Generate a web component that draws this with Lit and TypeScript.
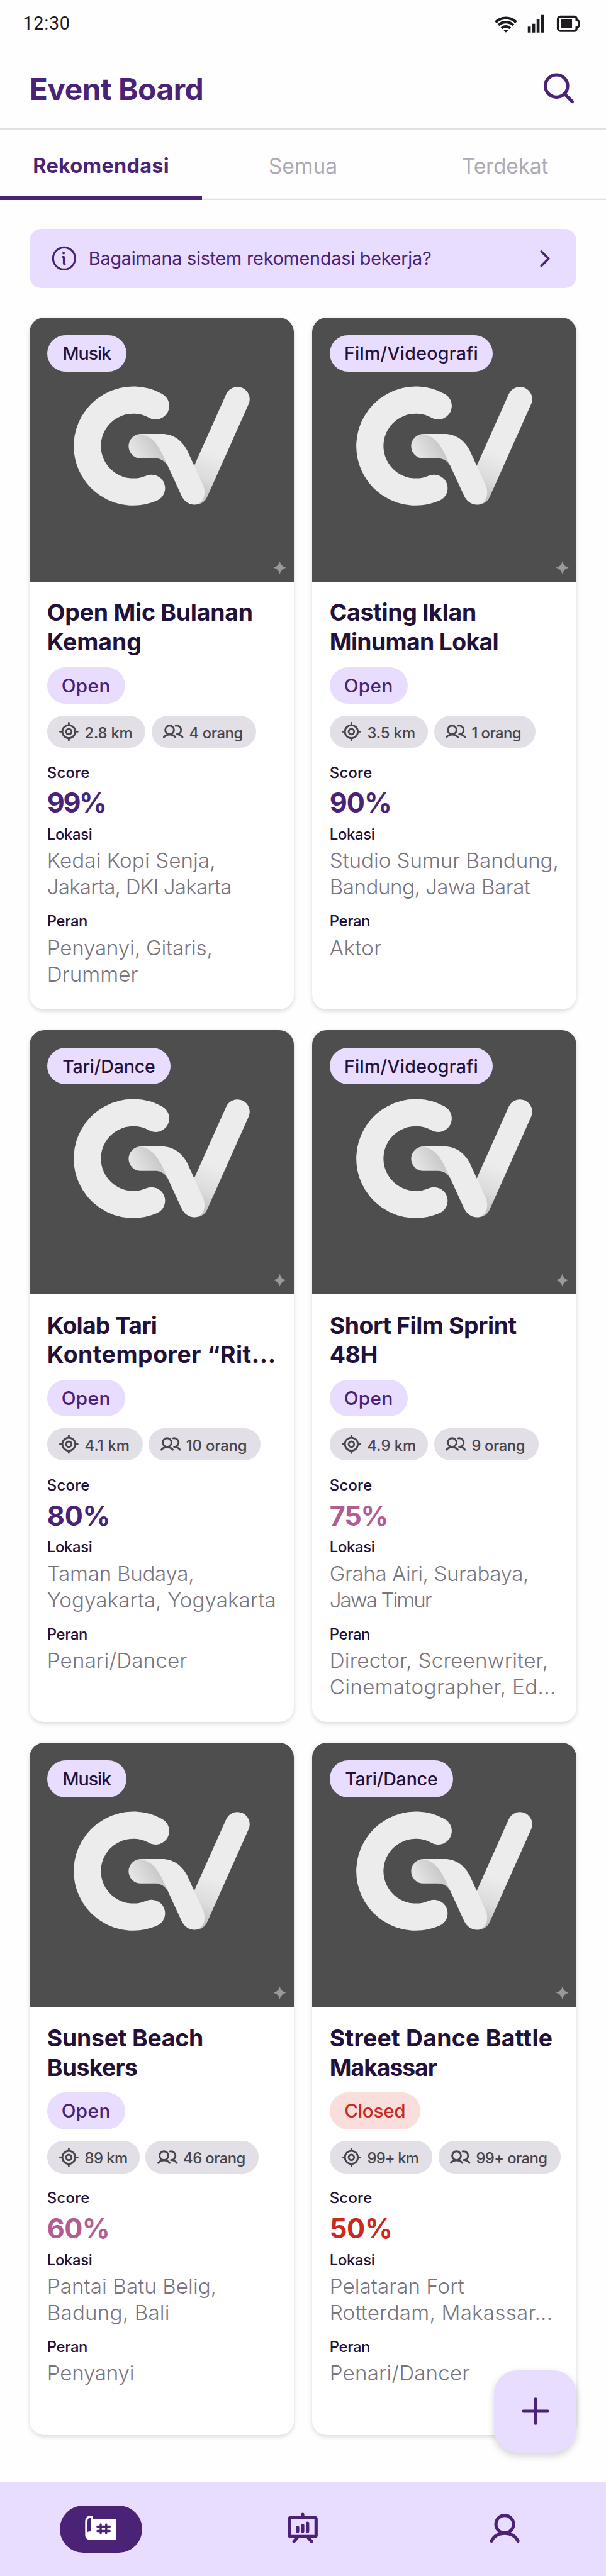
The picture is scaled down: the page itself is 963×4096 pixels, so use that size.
import { LitElement, html, css, unsafeCSS } from "lit";
import { customElement, property } from "lit/decorators.js";

// Layout units: the design is 412 x 1753 dp, with 3 artwork pixels per dp.
const DP = 4096 / 1753;
const PX = DP / 3;
const u = (n: number) => unsafeCSS(`${(n * DP).toFixed(3)}px`);

/** A single line of text, tracked so that its glyphs span `w` artwork pixels. */
@customElement("fit-line")
export class FitLine extends LitElement {
  static styles = css`
    :host { display: block; white-space: nowrap; font-kerning: normal; }
  `;
  @property({ type: Number }) w = 0;
  @property() text = "";

  updated() {
    if (!this.w || this.text.length < 2) return;
    const cs = getComputedStyle(this);
    const ctx = document.createElement("canvas").getContext("2d")!;
    ctx.font = `${cs.fontWeight} ${cs.fontSize} ${cs.fontFamily}`;
    const m = ctx.measureText(this.text);
    const ink = m.actualBoundingBoxLeft + m.actualBoundingBoxRight;
    const ls = (this.w * PX - ink) / (this.text.length - 1);
    this.style.letterSpacing = `${ls.toFixed(3)}px`;
  }
  render() { return html`${this.text}`; }
}

type Line = [string, number];
interface EventItem {
  tag: Line; tagW: number; title: Line[];
  closed?: boolean;
  km: Line; kmW: number; people: Line; peopleW: number;
  score: Line; tone: "high" | "mid" | "low";
  place: Line[]; roles: Line[];
}

const EVENTS: EventItem[] = [
  { tag: ["Musik", 97], tagW: 162, title: [["Open Mic Bulanan", 416], ["Kemang", 188]],
    km: ["2.8 km", 95], kmW: 201, people: ["4 orang", 108], peopleW: 213, score: ["99%", 116], tone: "high",
    place: [["Kedai Kopi Senja,", 337], ["Jakarta, DKI Jakarta", 373]], roles: [["Penyanyi, Gitaris,", 331], ["Drummer", 182]] },
  { tag: ["Film/Videografi", 269], tagW: 333, title: [["Casting Iklan", 295.5], ["Minuman Lokal", 340]],
    km: ["3.5 km", 95.5], kmW: 201, people: ["1 orang", 99.4], peopleW: 207, score: ["90%", 121], tone: "high",
    place: [["Studio Sumur Bandung,", 462], ["Bandung, Jawa Barat", 406]], roles: [["Aktor", 106]] },
  { tag: ["Tari/Dance", 187], tagW: 252, title: [["Kolab Tari", 221], ["Kontemporer “Rit...", 461]],
    km: ["4.1 km", 89], kmW: 195, people: ["10 orang", 122], peopleW: 228, score: ["80%", 123], tone: "high",
    place: [["Taman Budaya,", 296], ["Yogyakarta, Yogyakarta", 464.5]], roles: [["Penari/Dancer", 282]] },
  { tag: ["Film/Videografi", 269], tagW: 333, title: [["Short Film Sprint", 381], ["48H", 94.6]],
    km: ["4.9 km", 97], kmW: 201, people: ["9 orang", 107], peopleW: 213, score: ["75%", 114], tone: "mid",
    place: [["Graha Airi, Surabaya,", 401], ["Jawa Timur", 208]], roles: [["Director, Screenwriter,", 439], ["Cinematographer, Ed...", 456]] },
  { tag: ["Musik", 97], tagW: 162, title: [["Sunset Beach", 315], ["Buskers", 181.5]],
    km: ["89 km", 85.4], kmW: 189, people: ["46 orang", 125], peopleW: 231, score: ["60%", 122], tone: "mid",
    place: [["Pantai Batu Belig,", 339], ["Badung, Bali", 244]], roles: [["Penyanyi", 172]] },
  { tag: ["Tari/Dance", 187], tagW: 252, title: [["Street Dance Battle", 452], ["Makassar", 217]], closed: true,
    km: ["99+ km", 103], kmW: 210, people: ["99+ orang", 143.5], peopleW: 249, score: ["50%", 121], tone: "low",
    place: [["Pelataran Fort", 271], ["Rotterdam, Makassar...", 448]], roles: [["Penari/Dancer", 282]] },
];

const line = ([text, w]: Line) => html`<fit-line .w=${w} .text=${text}></fit-line>`;
const width = (w: number) => `width:${(w * PX).toFixed(2)}px`;

const logo = html`
  <svg class="art" viewBox="52 47 1411 1411" aria-hidden="true">
    <defs>
      <linearGradient id="fold" gradientUnits="userSpaceOnUse" x1="610" y1="770" x2="735" y2="700">
        <stop offset="0" stop-color="#e4e4e4"/><stop offset="1" stop-color="#c6c6c6"/>
      </linearGradient>
      <linearGradient id="arm" gradientUnits="userSpaceOnUse" x1="1060" y1="780" x2="975" y2="1000">
        <stop offset="0" stop-color="#ececec"/><stop offset=".6" stop-color="#dcdcdc"/><stop offset="1" stop-color="#c4c4c4"/>
      </linearGradient>
    </defs>
    <path d="M724 518 A245 245 0 1 0 702 957" fill="none" stroke="#ececec" stroke-width="145" stroke-linecap="round"/>
    <path d="M1160 482 L938 979" fill="none" stroke="url(#arm)" stroke-width="131" stroke-linecap="round"/>
    <path d="M645 668 A65 65 0 0 0 645 798 H722 C752 798 772 812 788 836 L800 740 L700 668Z" fill="url(#fold)"/>
    <path d="M640 668 H760 C815 668 863 700 892 755 L974 934 C1003 995 972 1045 932 1045 C900 1045 875 1025 862 997 L786 832 C768 792 752 755 732 727 C708 693 675 672 640 668Z" fill="#ececec"/>
    <path d="M1386 1347 Q1392 1375 1420 1381 Q1392 1387 1386 1415 Q1380 1387 1352 1381 Q1380 1375 1386 1347Z" fill="#999"/>
  </svg>`;

const targetIcon = html`
  <svg class="mini" viewBox="0 0 42 42" fill="none" stroke="currentColor" stroke-width="3.7" stroke-linecap="round">
    <circle cx="21" cy="21" r="13.2"/><circle cx="21" cy="21" r="5.6"/>
    <path d="M21 3v4M21 35v4M3 21h4M35 21h4"/>
  </svg>`;

const peopleIcon = html`
  <svg class="mini" viewBox="0 0 42 42" fill="none" stroke="currentColor" stroke-width="3.7" stroke-linecap="round" stroke-linejoin="round">
    <circle cx="13.5" cy="17.6" r="8.9"/>
    <path d="M1.9 32.3 C7.5 25.3 19.5 25.3 25.2 32.3"/>
    <path d="M26 8.9 C32 7.8 37 12.3 37 17.6 C37 22.6 33.3 26.3 27.8 26.5 C32.5 26.6 37 28.6 39.8 32.3"/>
  </svg>`;

@customElement("event-card")
export class EventCard extends LitElement {
  static styles = css`
    :host {
      display: block; position: relative; height: ${u(471)}; background: #fff;
      border-radius: ${u(10)}; box-shadow: 0 ${u(1)} ${u(3)} rgba(0,0,0,.14);
    }
    .art { display: block; width: 100%; height: ${u(180)}; background: #4e4e4e; border-radius: ${u(10)} ${u(10)} 0 0; }
    .pill {
      display: flex; align-items: center; justify-content: center; box-sizing: border-box;
      height: ${u(25)}; border-radius: ${u(12.5)}; background: #e8ddff; color: #241139;
      font-size: ${u(12.2)}; font-weight: 500;
    }
    .tag { position: absolute; top: ${u(12)}; left: ${u(12)}; }
    .body { padding: ${u(11.2)} ${u(12)} 0; }
    .title { font-size: ${u(16)}; line-height: ${u(20)}; font-weight: 700; color: #241139; height: ${u(40)}; }
    .status { margin-top: ${u(6.8)}; color: #4a2377; font-size: ${u(12.7)}; }
    .status.closed { background: #f9dedc; color: #cb2920; }
    .chips { display: flex; gap: ${u(4)}; margin-top: ${u(8)}; }
    .chip {
      display: flex; align-items: center; box-sizing: border-box; flex: none; height: ${u(22)};
      padding-left: ${u(8)}; border-radius: ${u(11)}; background: #e2dfe6; color: #48464c;
      font-size: ${u(10.2)}; font-weight: 500;
    }
    .mini { width: ${u(14)}; height: ${u(14)}; flex: none; margin-right: ${u(3.6)}; }
    .chip fit-line { padding-top: ${u(1.4)}; }
    .label { font-size: ${u(10.2)}; line-height: ${u(14)}; font-weight: 500; color: #241139; }
    .label.score-l { margin-top: ${u(10)}; }
    .label.place-l { margin-top: ${u(2.9)}; }
    .label.role-l { margin-top: ${u(7.7)}; }
    .score { font-size: ${u(18.5)}; line-height: ${u(24)}; font-weight: 700; margin-top: ${u(1.3)}; color: #4a2377; }
    .score.mid { color: #b25c92; }
    .score.low { color: #cb2920; }
    .text { font-size: ${u(14.2)}; line-height: ${u(18)}; font-weight: 300; color: #79747e; margin-top: ${u(1.5)}; }
  `;
  @property({ attribute: false }) item!: EventItem;

  render() {
    const e = this.item;
    return html`
      ${logo}
      <div class="pill tag" style=${width(e.tagW)}>${line(e.tag)}</div>
      <div class="body">
        <div class="title">${e.title.map(line)}</div>
        ${e.closed
          ? html`<div class="pill status closed" style=${width(185)}>${line(["Closed", 122])}</div>`
          : html`<div class="pill status" style=${width(159)}>${line(["Open", 96])}</div>`}
        <div class="chips">
          <div class="chip" style=${width(e.kmW)}>${targetIcon}${line(e.km)}</div>
          <div class="chip" style=${width(e.peopleW)}>${peopleIcon}${line(e.people)}</div>
        </div>
        <div class="label score-l">${line(["Score", 84])}</div>
        <div class="score ${e.tone}">${line(e.score)}</div>
        <div class="label place-l">${line(["Lokasi", 90])}</div>
        <div class="text">${e.place.map(line)}</div>
        <div class="label role-l">${line(["Peran", 80])}</div>
        <div class="text">${e.roles.map(line)}</div>
      </div>`;
  }
}

@customElement("app-root")
export class AppRoot extends LitElement {
  static styles = css`
    :host {
      display: flex; flex-direction: column; position: relative; width: 100%; height: 4096px;
      overflow: hidden; background: #fefefe; font-family: Inter, "Liberation Sans", sans-serif;
    }
    svg { display: block; flex: none; }
    .statusbar { display: flex; justify-content: space-between; align-items: center; flex: none;
      height: ${u(32)}; padding: 0 ${u(17)} 0 ${u(15.5)}; box-sizing: border-box; color: #1d1b20; }
    .time { font-family: Roboto, sans-serif; font-size: ${u(12.3)}; line-height: ${u(32)}; font-weight: 400; }
    .system { width: ${u(59)}; height: ${u(16)}; }
    .header { display: flex; justify-content: space-between; align-items: center; flex: none; height: ${u(56)};
      box-sizing: border-box; padding: 0 ${u(20)}; border-bottom: ${u(1)} solid #e2dfe6; color: #4a2377; }
    .header h1 { margin: 0; padding-top: ${u(2.8)}; font-size: ${u(20.5)}; font-weight: 700; }
    .search { width: ${u(24)}; height: ${u(24)}; margin-bottom: ${u(1.6)}; }
    .tabs { display: grid; grid-template-columns: repeat(3, 1fr); flex: none; height: ${u(48)};
      box-shadow: inset 0 -${u(1)} #e2dfe6; color: #aeaab3; font-size: ${u(14.4)}; }
    .tab { display: flex; justify-content: center; line-height: ${u(49.4)}; height: ${u(48)}; font-weight: 400; }
    .tab.active { color: #4a2377; font-size: ${u(13.9)}; font-weight: 700; box-shadow: inset 0 -${u(2.6)} #4a2377; }
    .main { display: flex; flex-direction: column; gap: ${u(20)}; flex: none; height: ${u(1553)};
      box-sizing: border-box; padding: ${u(20)} ${u(20)} 0; }
    .banner { display: flex; align-items: center; height: ${u(40)}; border-radius: ${u(8)}; background: #e8ddff;
      color: #4a2377; font-size: ${u(12.3)}; line-height: ${u(40)}; padding: 0 ${u(17)} 0 ${u(15.3)}; }
    .info { width: ${u(17)}; height: ${u(17)}; margin-right: ${u(8)}; }
    .chevron { width: ${u(9)}; height: ${u(14)}; margin-left: auto; }
    .grid { display: grid; grid-template-columns: ${u(180)} ${u(180)}; justify-content: space-between; row-gap: ${u(14)}; }
    .nav { display: grid; grid-template-columns: repeat(3, 1fr); align-items: center; justify-items: center;
      flex: none; height: ${u(64)}; background: #e8ddff; color: #4a2377; }
    .slot { display: flex; align-items: center; justify-content: center; width: ${u(56)}; height: ${u(32)}; border-radius: ${u(16)}; }
    .slot.on { background: #4a2377; }
    .slot svg { width: ${u(24)}; height: ${u(24)}; }
    .fab { position: absolute; right: ${u(20)}; bottom: ${u(84)}; width: ${u(56)}; height: ${u(56)};
      display: flex; align-items: center; justify-content: center; border-radius: ${u(16)};
      background: #e8ddff; color: #4a2377; box-shadow: 0 ${u(2)} ${u(5)} rgba(0,0,0,.17); }
    .fab svg { width: ${u(24)}; height: ${u(24)}; }
  `;

  render() {
    return html`
      <div class="statusbar">
        <div class="time">${line(["12:30", 92])}</div>
        <svg class="system" viewBox="1008 24 177 48" fill="none" stroke="currentColor">
          <path stroke-width="5.6" d="M1011.3 45 A29.7 29.7 0 0 1 1053.3 45"/>
          <path stroke-width="5.4" d="M1017.3 51 A21.3 21.3 0 0 1 1047.3 51"/>
          <path stroke-width="5" d="M1023.5 57.2 A12.5 12.5 0 0 1 1041.1 57.2"/>
          <path fill="currentColor" stroke="none" d="M1032.3 66 L1027.8 61.6 Q1032.3 58.6 1036.8 61.6Z"/>
          <path fill="currentColor" stroke="none" d="M1077 54h6v12h-6zM1086 48h6v18h-6zM1095 39h6v27h-6zM1104 30h6v36h-6z"/>
          <path stroke-width="4.4" d="M1143.5 33.5H1172a4.5 4.5 0 0 1 4.5 4.5V40.6q4.5 1 4.5 4v7q0 3-4.5 4V58a4.5 4.5 0 0 1-4.5 4.5H1143.5a5 5 0 0 1-5-5V38.5a5 5 0 0 1 5-5z"/>
          <path fill="currentColor" stroke="none" d="M1144.7 38.7h22.6v18h-22.6z"/>
        </svg>
      </div>
      <div class="header">
        <h1>${line(["Event Board", 349])}</h1>
        <svg class="search" viewBox="1104 140 72 72" fill="none" stroke="currentColor" stroke-width="6.6" stroke-linecap="round">
          <circle cx="1135.3" cy="175.5" r="22.7"/><path d="M1152 192 L1167.3 207.3"/>
        </svg>
      </div>
      <div class="tabs">
        <div class="tab active">${line(["Rekomendasi", 274])}</div>
        <div class="tab">${line(["Semua", 137])}</div>
        <div class="tab">${line(["Terdekat", 175])}</div>
      </div>
      <div class="main">
        <div class="banner">
          <svg class="info" viewBox="0 0 51 51" fill="none" stroke="currentColor" stroke-width="4" stroke-linecap="round" stroke-linejoin="round">
            <circle cx="25.5" cy="25.5" r="22.5"/><path d="M22.8 22.5h2.2v13q0 1.5 2 1.5"/><circle cx="24.5" cy="14.8" r="2.6" fill="currentColor" stroke="none"/>
          </svg>
          ${line(["Bagaimana sistem rekomendasi bekerja?", 696])}
          <svg class="chevron" viewBox="0 0 27 42" fill="none" stroke="currentColor" stroke-width="4.6" stroke-linecap="round" stroke-linejoin="round">
            <path d="M5.5 6.3 L20.3 21 L5.5 35.7"/>
          </svg>
        </div>
        <div class="grid">${EVENTS.map((e) => html`<event-card .item=${e}></event-card>`)}</div>
      </div>
      <div class="nav">
        <div class="slot on">
          <svg viewBox="0 0 72 72">
            <path fill="#fff" d="M4.3 49V19.5A10.5 10.5 0 0 1 14.8 9H18.8A1.5 1.5 0 0 1 20.3 10.5V15.3H66.5A1.5 1.5 0 0 1 68 16.8V57.2A1.5 1.5 0 0 1 66.5 58.7H14A9.7 9.7 0 0 1 4.3 49Z"/>
            <path fill="#4a2377" d="M9 42.3V20.5Q9 13.5 16 13.5V41Q12 41 9 42.3Z"/>
            <path stroke="#4a2377" stroke-width="4.3" stroke-linecap="round" d="M29.3 31.4H54.4M29.3 40.4H54.4M36 27V45.3M47.2 27V45.3"/>
          </svg>
        </div>
        <div class="slot">
          <svg viewBox="0 0 72 72" fill="none" stroke="currentColor" stroke-width="6.6" stroke-linecap="round">
            <rect x="8.7" y="13.3" width="54.6" height="38.4" rx="2"/>
            <path d="M36 6.5V12M25.7 33.3V40.7M36 29V40.7M46 24.5V40.7M24.3 54.5L18 61.7M47.7 54.5L54 61.7"/>
          </svg>
        </div>
        <div class="slot">
          <svg viewBox="0 0 72 72" fill="none" stroke="currentColor" stroke-width="6.6" stroke-linecap="round">
            <circle cx="36" cy="26.5" r="18"/><path d="M9 60.8C14 50.5 24 45.3 36 45.3S58 50.5 63 60.8"/>
          </svg>
        </div>
      </div>
      <div class="fab">
        <svg viewBox="0 0 72 72" stroke="currentColor" stroke-width="6.5" stroke-linecap="round"><path d="M36 11.3V60.7M11.3 36H60.7"/></svg>
      </div>`;
  }
}
